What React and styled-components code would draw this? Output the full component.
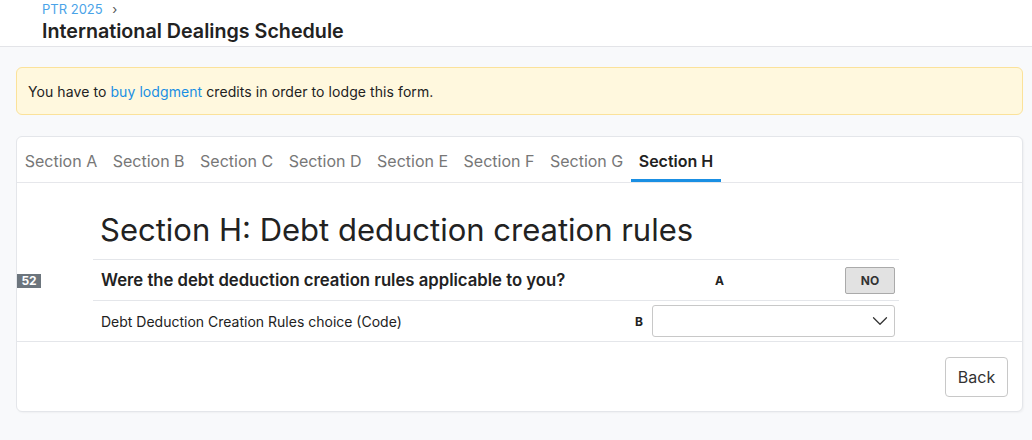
import React from 'react';
import styled, { createGlobalStyle } from 'styled-components';
import { ChevronDown } from 'lucide-react';

const GlobalStyle = createGlobalStyle`
  html, body {
    margin: 0;
    padding: 0;
    background: #f8f9fb;
    font-family: Inter, "Noto Sans", sans-serif;
    color: #212529;
  }
  * {
    box-sizing: border-box;
  }
`;

const tabs = ['A', 'B', 'C', 'D', 'E', 'F', 'G', 'H'];

const App = () => {
  return (
    <>
      <GlobalStyle />
      <Header>
        <Crumb>
          PTR 2025 <CrumbSep>›</CrumbSep>
        </Crumb>
        <Title>International Dealings Schedule</Title>
      </Header>
      <Page>
        <Alert>
          <span>
            You have to <AlertLink href="#">buy lodgment</AlertLink> credits in
            order to lodge this form.
          </span>
        </Alert>
        <Card>
          <TabBar>
            {tabs.map((t) => (
              <Tab key={t} $active={t === 'H'}>
                Section {t}
              </Tab>
            ))}
          </TabBar>
          <FormBody>
            <Heading>Section H: Debt deduction creation rules</Heading>
            <Row>
              <BadgeCell>
                <Badge>52</Badge>
              </BadgeCell>
              <Main>
                <Question>
                  Were the debt deduction creation rules applicable to you?
                </Question>
                <Field>
                  <FieldLabel $gap={121}>A</FieldLabel>
                  <ToggleButton>NO</ToggleButton>
                </Field>
              </Main>
            </Row>
            <Row $last>
              <BadgeCell />
              <Main $last>
                <Prompt>Debt Deduction Creation Rules choice (Code)</Prompt>
                <Field>
                  <FieldLabel $gap={9}>B</FieldLabel>
                  <Select>
                    <ChevronDown size={26} strokeWidth={1.15} color="#333" />
                  </Select>
                </Field>
              </Main>
            </Row>
          </FormBody>
          <Footer>
            <BackButton>Back</BackButton>
          </Footer>
        </Card>
      </Page>
    </>
  );
};

export default App;

const Header = styled.header`
  background: #fff;
  border-bottom: 1px solid #e3e4e8;
  padding: 0 42px;
  height: 47px;
`;

const Crumb = styled.div`
  font-size: 13px;
  line-height: 18px;
  color: #4aa3e8;
`;

const CrumbSep = styled.span`
  color: #555;
  margin-left: 6px;
`;

const Title = styled.h1`
  margin: 0;
  font-size: 19.7px;
  line-height: 26px;
  font-weight: 600;
  color: #222;
`;

const Page = styled.main`
  padding: 20px 9px 20px 16px;
  display: flex;
  flex-direction: column;
  gap: 21px;
`;

const Alert = styled.div`
  background: #fff8de;
  border: 1px solid #fbe29a;
  border-radius: 6px;
  height: 48px;
  padding: 0 11px;
  display: flex;
  align-items: center;
  font-size: 14px;
  letter-spacing: 0.08px;
  color: #222;
`;

const AlertLink = styled.a`
  color: #1a8fe3;
  text-decoration: none;
`;

const Card = styled.section`
  background: #fff;
  border: 1px solid #e4e6ea;
  border-radius: 6px;
  box-shadow: 1px 1px 2px rgba(0, 0, 0, 0.04);
`;

const TabBar = styled.nav`
  display: flex;
  height: 46px;
  border-bottom: 1px solid #e6e7eb;
`;

const Tab = styled.div`
  display: flex;
  align-items: center;
  padding: 5px 7.75px 0;
  font-size: 16px;
  font-weight: ${({ $active }) => ($active ? 600 : 400)};
  color: ${({ $active }) => ($active ? '#222' : '#777')};
  border-bottom: 3px solid
    ${({ $active }) => ($active ? '#1a8fe3' : 'transparent')};
`;

const FormBody = styled.div`
  display: flex;
  flex-direction: column;
`;

const Heading = styled.h2`
  margin: 0 0 0 76px;
  padding: 27px 0 9px 7px;
  width: 806px;
  font-size: 31px;
  line-height: 40px;
  font-weight: 400;
  color: #222;
  border-bottom: 1px solid #e4e6ea;
`;

const Row = styled.div`
  display: flex;
  height: ${({ $last }) => ($last ? '40px' : '41px')};
`;

const BadgeCell = styled.div`
  width: 76px;
  display: flex;
  align-items: center;
`;

const Badge = styled.span`
  background: #6c757d;
  color: #fff;
  font-size: 12px;
  font-weight: 700;
  width: 24px;
  height: 14px;
  line-height: 14px;
  text-align: center;
`;

const Main = styled.div`
  width: 806px;
  display: flex;
  align-items: center;
  justify-content: space-between;
  padding: 0 4px 0 8px;
  border-bottom: ${({ $last }) => ($last ? 'none' : '1px solid #e4e6ea')};
`;

const Question = styled.div`
  font-size: 16.7px;
  font-weight: 600;
  color: #222;
`;

const Prompt = styled.div`
  font-size: 14px;
  color: #222;
`;

const Field = styled.div`
  display: flex;
  align-items: center;
`;

const FieldLabel = styled.span`
  font-size: 12px;
  font-weight: 700;
  color: #222;
  margin-right: ${({ $gap }) => $gap}px;
`;

const ToggleButton = styled.button`
  width: 50px;
  height: 27px;
  background: #e2e2e2;
  border: 1px solid #aaa;
  border-radius: 2px;
  font-family: inherit;
  font-size: 12px;
  font-weight: 700;
  color: #333;
  padding: 0;
`;

const Select = styled.div`
  width: 243px;
  height: 32px;
  border: 1px solid #c8c8c8;
  border-radius: 3px;
  display: flex;
  align-items: center;
  justify-content: flex-end;
  padding-right: 1px;
`;

const Footer = styled.footer`
  border-top: 1px solid #e4e6ea;
  display: flex;
  justify-content: flex-end;
  padding: 15px 14px 14px;
`;

const BackButton = styled.button`
  height: 40px;
  width: 63px;
  background: #fff;
  border: 1px solid #c8c8c8;
  border-radius: 4px;
  font-family: inherit;
  font-size: 16px;
  color: #333;
`;
